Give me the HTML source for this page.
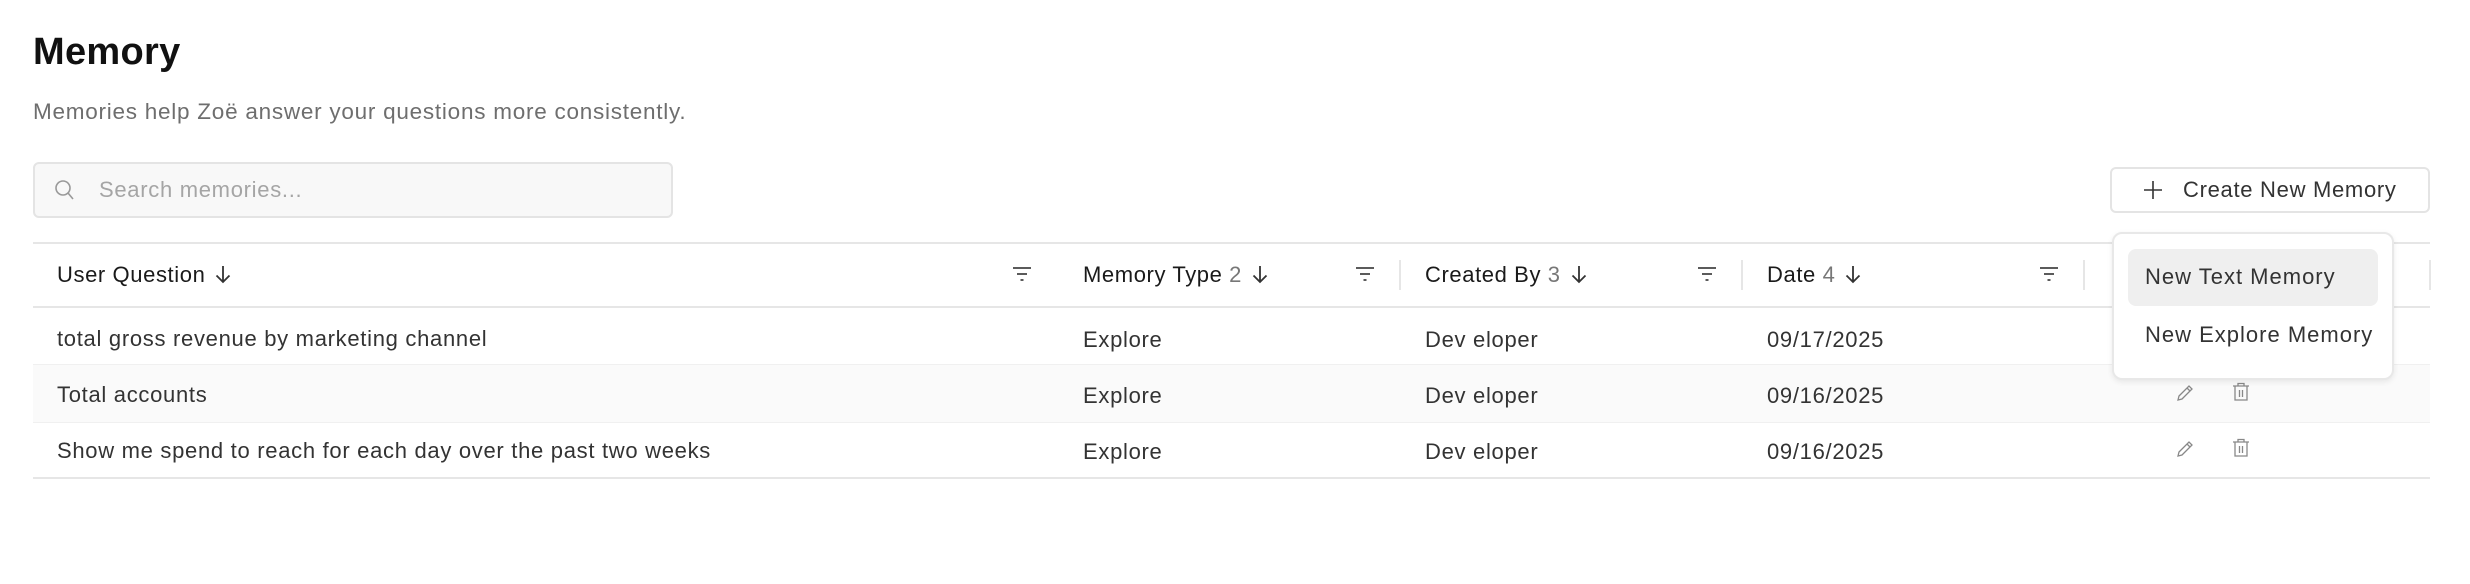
<!DOCTYPE html>
<html><head><meta charset="utf-8"><style>
*{box-sizing:border-box;margin:0;padding:0}
body{width:2470px;height:584px;background:#fff;font-family:"Liberation Sans",sans-serif;position:relative;overflow:hidden;color:#2a2a2a}
.a{position:absolute;white-space:nowrap}
h1{position:absolute;left:33px;top:31px;font-size:38px;font-weight:bold;color:#111;letter-spacing:0.3px}
.sub{left:33px;top:99px;font-size:22.5px;color:#6e6e6e;letter-spacing:0.75px}
.search{left:33px;top:162px;width:640px;height:56px;background:#f8f8f8;border:2px solid #e4e4e4;border-radius:6px}
.ph{left:99px;top:177px;font-size:22px;color:#a5a5a5;letter-spacing:0.7px}
.line{position:absolute;left:33px;width:2397px;height:2px;background:#e6e6e6}
.band{position:absolute;left:33px;width:2397px;background:#fafafa}
.hd{font-size:22px;color:#1a1a1a;top:262px;letter-spacing:0.6px}
.hd .n{color:#777}
.hd svg{vertical-align:-2px;margin-left:10px}
.cell{font-size:22px;color:#333;letter-spacing:0.7px}
.sep{position:absolute;width:2px;height:30px;top:260px;background:#e6e6e6}
.btn{left:2110px;top:167px;width:320px;height:46px;border:2px solid #e4e4e4;border-radius:6px;background:#fff}
.dd{left:2112px;top:232px;width:282px;height:148px;background:#fff;border:2px solid #e8e8e8;border-radius:10px;box-shadow:0 2px 6px rgba(0,0,0,.08)}
.hl{left:2128px;top:249px;width:250px;height:57px;background:#efefef;border-radius:8px}
.di{font-size:22px;color:#333;letter-spacing:1.0px}
</style></head><body>
<svg width="0" height="0" style="position:absolute"><defs>
<g id="f"><path d="M1 2h18M5 8h10M8.5 14h3" stroke="#444" stroke-width="1.8"/></g>
<g id="ar"><path d="M8 1v16M1.5 10.5L8 17l6.5-6.5" fill="none" stroke="#333" stroke-width="1.8"/></g>
<g id="p"><path d="M3 18l1-4 10-10 3 3-10 10z M12 6l3 3" fill="none" stroke="#888" stroke-width="1.3"/></g>
<g id="t"><path d="M1 4h16M6 4V1.5h6V4M3 4v14h12V4M7.5 8v7M10.5 8v7" fill="none" stroke="#888" stroke-width="1.3"/></g>
</defs></svg>
<h1>Memory</h1>
<div class="a sub">Memories help Zoë answer your questions more consistently.</div>
<div class="a search"></div>
<svg class="a" style="left:53px;top:178px" width="22" height="24" viewBox="0 0 22 24"><circle cx="10" cy="10" r="7" fill="none" stroke="#999" stroke-width="1.6"/><path d="M15 15l5 6" stroke="#999" stroke-width="1.6"/></svg>
<div class="a ph">Search memories...</div>

<div class="a btn"></div>
<svg class="a" style="left:2142px;top:179px" width="22" height="22" viewBox="0 0 22 22"><path d="M11 2v18M2 11h18" stroke="#333" stroke-width="1.6"/></svg>
<div class="a" style="left:2183px;top:177px;font-size:22px;color:#333;letter-spacing:0.7px">Create New Memory</div>

<div class="band" style="top:364px;height:58px"></div>
<div class="line" style="top:242px"></div>
<div class="line" style="top:306px"></div>
<div class="line" style="top:364px;height:1px;background:#f0f0f0"></div>
<div class="line" style="top:422px;height:1px;background:#f0f0f0"></div>
<div class="line" style="top:477px"></div>

<div class="a hd" style="left:57px">User Question<svg width="16" height="19"><use href="#ar"/></svg></div>
<div class="a hd" style="left:1083px">Memory Type <span class="n">2</span><svg width="16" height="19"><use href="#ar"/></svg></div>
<div class="a hd" style="left:1425px">Created By <span class="n">3</span><svg width="16" height="19"><use href="#ar"/></svg></div>
<div class="a hd" style="left:1767px">Date <span class="n">4</span><svg width="16" height="19"><use href="#ar"/></svg></div>

<svg class="a" style="left:1012px;top:266px" width="20" height="16"><use href="#f"/></svg>
<svg class="a" style="left:1355px;top:266px" width="20" height="16"><use href="#f"/></svg>
<svg class="a" style="left:1697px;top:266px" width="20" height="16"><use href="#f"/></svg>
<svg class="a" style="left:2039px;top:266px" width="20" height="16"><use href="#f"/></svg>
<div class="sep" style="left:1399px"></div>
<div class="sep" style="left:1741px"></div>
<div class="sep" style="left:2083px"></div>
<div class="sep" style="left:2429px"></div>

<div class="a cell" style="left:57px;top:326px">total gross revenue by marketing channel</div>
<div class="a cell" style="left:57px;top:382px">Total accounts</div>
<div class="a cell" style="left:57px;top:438px">Show me spend to reach for each day over the past two weeks</div>
<div class="a cell" style="left:1083px;top:327px">Explore</div>
<div class="a cell" style="left:1083px;top:383px">Explore</div>
<div class="a cell" style="left:1083px;top:439px">Explore</div>
<div class="a cell" style="left:1425px;top:327px">Dev eloper</div>
<div class="a cell" style="left:1425px;top:383px">Dev eloper</div>
<div class="a cell" style="left:1425px;top:439px">Dev eloper</div>
<div class="a cell" style="left:1767px;top:327px">09/17/2025</div>
<div class="a cell" style="left:1767px;top:383px">09/16/2025</div>
<div class="a cell" style="left:1767px;top:439px">09/16/2025</div>

<svg class="a" style="left:2175px;top:382px" width="20" height="20"><use href="#p"/></svg>
<svg class="a" style="left:2232px;top:382px" width="18" height="20"><use href="#t"/></svg>
<svg class="a" style="left:2175px;top:438px" width="20" height="20"><use href="#p"/></svg>
<svg class="a" style="left:2232px;top:438px" width="18" height="20"><use href="#t"/></svg>

<div class="a dd"></div>
<div class="a hl"></div>
<div class="a di" style="left:2145px;top:264px">New Text Memory</div>
<div class="a di" style="left:2145px;top:322px">New Explore Memory</div>
</body></html>
